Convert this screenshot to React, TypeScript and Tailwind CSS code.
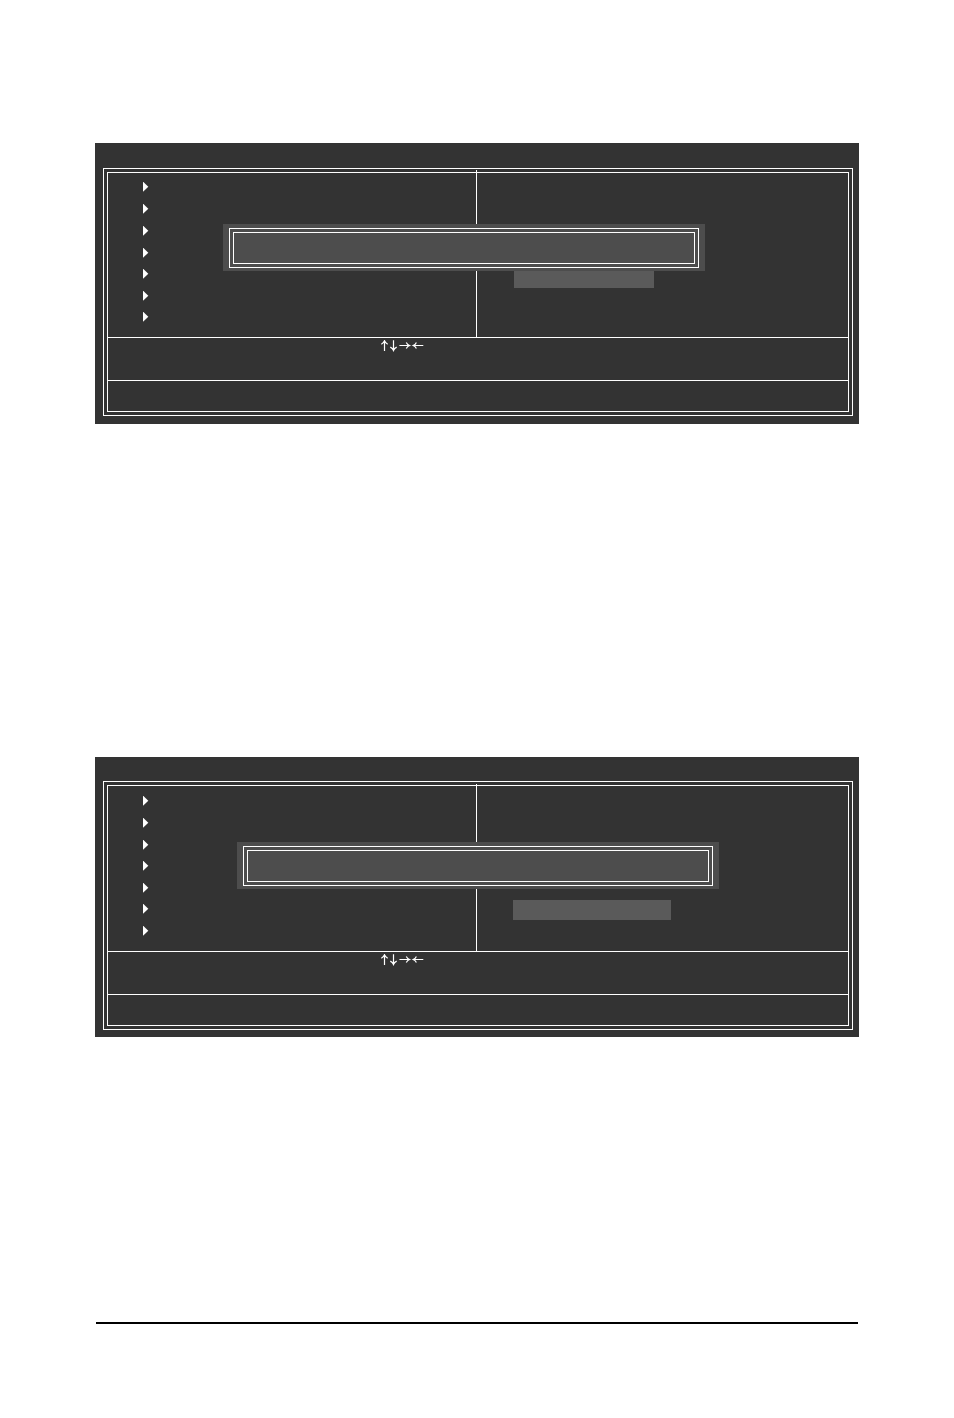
type BiosScreenProps = {
  header: string;
  rows: string[];
  listTop: string;
  menuHeight: string;
  footer: string;
  divider: string;
  dialog: string;
  highlight: string;
};

function ArrowKeys() {
  return (
    <svg
      width="44"
      height="12"
      viewBox="0 0 44 12"
      fill="none"
      stroke="white"
      strokeWidth="1.2"
    >
      {/* Up, down */}
      <path d="M4.5 11V1M1.3 4.2C2.8 3.4 3.9 2.3 4.5 0.8C5.1 2.3 6.2 3.4 7.7 4.2" />
      <path d="M13.5 0.3V10.3M10.3 7.1C11.8 7.9 12.9 9 13.5 10.5C14.1 9 15.2 7.9 16.7 7.1" />
      {/* Right, left */}
      <path d="M19.4 5.5H29.4M26.3 2.4C27 3.9 28.1 4.9 29.6 5.5C28.1 6.1 27 7.1 26.3 8.6" />
      <path d="M43.3 5.5H33.3M36.4 2.4C35.7 3.9 34.6 4.9 33.1 5.5C34.6 6.1 35.7 7.1 36.4 8.6" />
    </svg>
  );
}

function BiosScreen({
  header,
  rows,
  listTop,
  menuHeight,
  footer,
  divider,
  dialog,
  highlight,
}: BiosScreenProps) {
  return (
    <section className={`relative bg-[#333333] pl-2 pr-1.5 ${footer}`}>
      {/* Title bar */}
      <header className={header} />

      {/* Double frame */}
      <div className="border border-white p-[3px]">
        <div className="border border-white">
          {/* Menu columns */}
          <div
            className={`grid grid-cols-[369fr_371fr] border-b border-white ${menuHeight}`}
          >
            <div className="relative border-r border-white">
              <ul className={`pl-[35px] ${listTop}`}>
                {rows.map((row, i) => (
                  <li key={i} className={row}>
                    <svg width="6" height="10" viewBox="0 0 6 10" fill="white">
                      <path d="M0 -0.4L5.3 4.7L0 9.8Z" />
                    </svg>
                  </li>
                ))}
              </ul>
              {/* Divider runs up into the frame gap */}
              <span
                className={`absolute -right-px w-px bg-white ${divider}`}
              />
            </div>
            <div>
              <div className={`bg-[#5a5a5a] ${highlight}`} />
            </div>
          </div>

          {/* Key help */}
          <div className="h-[43px] border-b border-white pl-[272px] pt-0.5">
            <ArrowKeys />
          </div>

          {/* Item description */}
          <div className="h-[30px]" />
        </div>
      </div>

      {/* Message box */}
      <div
        role="dialog"
        className={`absolute bg-[#4d4d4d] px-1.5 pb-[3px] pt-1 ${dialog}`}
      >
        <div className="border border-white p-[3px]">
          <div className="h-8 border border-white" />
        </div>
      </div>
    </section>
  );
}

export default function App() {
  return (
    <main className="min-h-screen bg-white px-[95px] pb-[94px] pt-[143px] font-['Liberation_Sans',sans-serif]">
      <BiosScreen
        header="h-[25px]"
        footer="pb-2"
        menuHeight="h-[165px]"
        listTop="pt-[9px]"
        rows={[
          "h-[22px]",
          "h-[22px]",
          "h-[22px]",
          "h-[21px]",
          "h-[22px]",
          "h-[21px]",
          "h-[10px]",
        ]}
        divider="-top-[3px] h-[3px]"
        dialog="left-[128px] right-[154px] top-[81px]"
        highlight="ml-[37px] mt-[98px] h-[17px] w-[140px]"
      />

      <div className="h-[333px]" />

      <BiosScreen
        header="h-6"
        footer="pb-[7px]"
        menuHeight="h-[166px]"
        listTop="pt-[10px]"
        rows={[
          "h-[22px]",
          "h-[22px]",
          "h-[21px]",
          "h-[22px]",
          "h-[21px]",
          "h-[22px]",
          "h-[10px]",
        ]}
        divider="-top-0.5 h-0.5"
        dialog="left-[142px] right-[140px] top-[85px]"
        highlight="ml-9 mt-[114px] h-5 w-[158px]"
      />

      {/* Page footer rule */}
      <hr className="mx-px mt-[285px] border-0 border-t-2 border-black" />
    </main>
  );
}
